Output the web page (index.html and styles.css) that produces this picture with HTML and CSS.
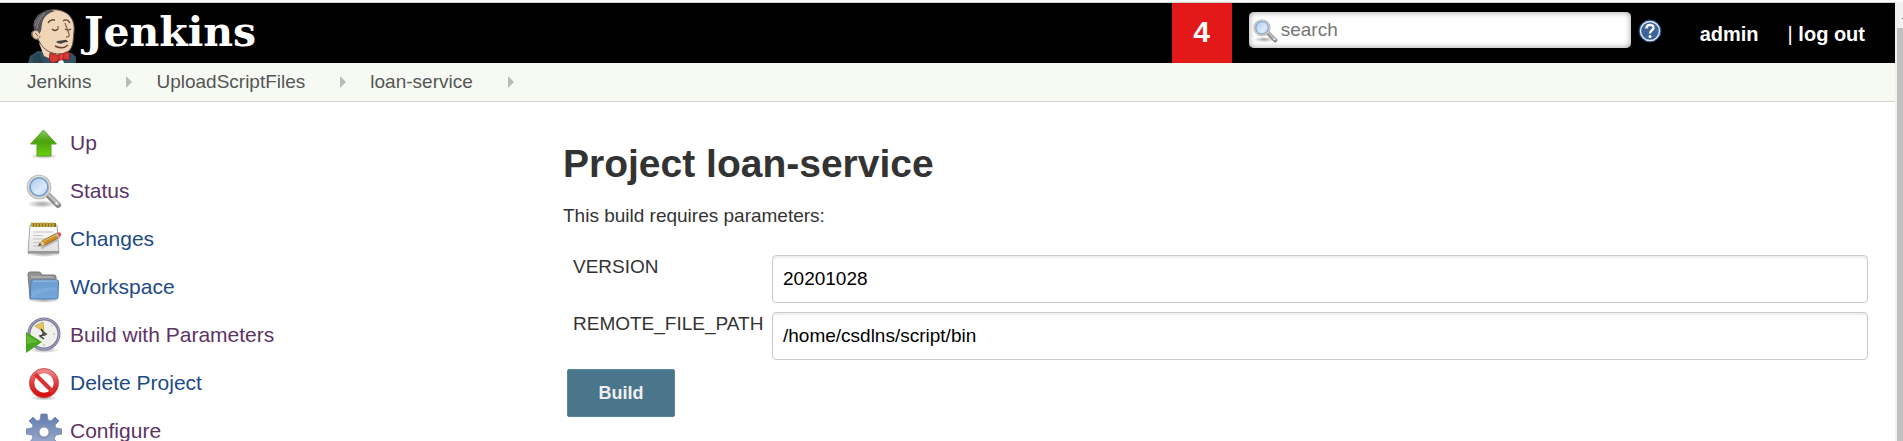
FILE: index.html
```html
<!DOCTYPE html>
<html lang="en">
<head>
<meta charset="utf-8">
<title>loan-service [Jenkins]</title>
<link rel="stylesheet" href="styles.css">
</head>
<body>
<div class="window">
  <div class="page">
    <header class="header">
      <a class="logo" href="#">
        <svg class="butler" viewBox="0 0 50 54" aria-hidden="true">
          <path d="M1 54 3 47 11 42 34 43 45 44 49 48V54z" fill="#335061"/>
          <path d="M5 48 12 44 17 54H7z" fill="#264452"/>
          <path d="M12 34 17 47 24 50 38 43 30 38z" fill="#f0d6b7"/>
          <path d="M7 29C3 27 4 21 8 22L10 10C15 1 26-1 35 2C44 5 48 13 47 22L46 33C45 41 40 45 33 45C24 45 17 41 13 34L11 30z" fill="#f0d6b7" stroke="#655449" stroke-width="1"/>
          <path d="M8 22C4 15 8 7 14 4C18 1 24 0 28 2C20 4 16 9 15 15L14 22 11 27 10 22z" fill="#555355"/>
          <path d="M8 17C10 10 13 7 18 4M10 20C11 13 13 9 17 6" fill="none" stroke="#929092"/>
          <path d="M11 22C4 19 4 28 8 30C11 31 13 29 13 27M8 24 11 27" fill="#eac8a5" stroke="#6d6b6d" stroke-width="1"/>
          <path d="M21 14Q23 10 28 11M36 12Q40 9 43 14M25 20Q28 23 31 20M38 20Q41 22 44 20" fill="none" stroke="#4d3c32" stroke-width="1.3"/>
          <path d="M31 20V17M38 14 42 25Q43 28 39 28" fill="none" stroke="#8b6b50" stroke-width="1.3"/>
          <path d="M29 33C31 31 34 32 37 31Q40 30 41 33Q38 33 36 34 33 36 29 33z" fill="#49433e"/>
          <path d="M28 37Q36 41 41 36" fill="none" stroke="#6b3d32" stroke-width="1.4"/>
          <path d="M34 46 37 54H31z" fill="#fff"/>
          <path d="M23 44 33 47 39 43 43 44 42 51 35 50 26 54 22 51z" fill="#d33833" stroke="#87201d" stroke-width=".8"/>
          <path d="M32 45 37 45 36 51 32 51z" fill="#ef3d3a" stroke="#87201d" stroke-width=".7"/>
        </svg>
        <span class="wordmark">Jenkins</span>
      </a>
      <a class="alerts" href="#">4</a>
      <form class="search" role="search">
        <label class="search-box">
          <svg class="search-icon" viewBox="0 0 36 36" aria-hidden="true"><use href="#magnifier"/></svg>
          <input class="search-input" type="text" placeholder="search" aria-label="search">
        </label>
        <a class="help" href="#" aria-label="Help">
          <svg class="help-icon" viewBox="0 0 24 24" aria-hidden="true">
            <circle cx="12" cy="12" r="11" fill="#31598e" stroke="#254674"/>
            <circle cx="12" cy="12" r="9.5" fill="#3d6399" stroke="#dce7f4" stroke-width="1.5"/>
            <path d="M8.3 9.5C8.5 4.4 16 5 15.500 9C15.200 11.500 12 11.500 12 14.500" fill="none" stroke="#fff" stroke-width="2.4"/>
            <circle cx="12" cy="17.5" r="1.5" fill="#fff"/>
          </svg>
        </a>
      </form>
      <nav class="login" aria-label="Account">
        <a class="login-link" href="#">admin</a>
        <span class="logout">| <a class="login-link" href="#">log out</a></span>
      </nav>
    </header>

    <nav class="breadcrumbs" aria-label="Breadcrumb">
      <a class="crumb" href="#">Jenkins</a><span class="arrow"></span>
      <a class="crumb" href="#">UploadScriptFiles</a><span class="arrow"></span>
      <a class="crumb" href="#">loan-service</a><span class="arrow"></span>
    </nav>

    <div class="body">
      <nav class="tasks" aria-label="Project tasks">
        <a class="task visited" href="#">
          <svg class="task-icon" viewBox="0 0 36 36" aria-hidden="true">
            <defs>
              <linearGradient id="green" x2="0" y2="1"><stop stop-color="#8bc95b"/><stop offset=".45" stop-color="#4aa20c"/><stop offset="1" stop-color="#6bd00b"/></linearGradient>
              <linearGradient id="glass" x2="1" y2="1"><stop stop-color="#9fc4ee"/><stop offset=".6" stop-color="#dceaf9"/><stop offset="1" stop-color="#a9cbee"/></linearGradient>
              <linearGradient id="paper" x2="0" y2="1"><stop stop-color="#fff"/><stop offset="1" stop-color="#dedede"/></linearGradient>
              <linearGradient id="blue" x2="0" y2="1"><stop stop-color="#6c9dd0"/><stop offset="1" stop-color="#75a7dc"/></linearGradient>
              <linearGradient id="red" x2="0" y2="1"><stop stop-color="#ed8585"/><stop offset=".5" stop-color="#dd3e3e"/><stop offset="1" stop-color="#d80e0e"/></linearGradient>
              <linearGradient id="steel" x2="0" y2="1"><stop stop-color="#5f7daf"/><stop offset="1" stop-color="#a4b1d2"/></linearGradient>
              <radialGradient id="shade"><stop stop-color="#000" stop-opacity=".35"/><stop offset="1" stop-color="#000" stop-opacity="0"/></radialGradient>
            </defs>
            <ellipse cx="18" cy="31" rx="14" ry="3" fill="url(#shade)"/>
            <path d="M17.500 5 30.500 19H25V31H11V19H4.500z" fill="url(#green)" stroke="#55a52a"/>
          </svg>Up</a>
        <a class="task visited" href="#">
          <svg class="task-icon" viewBox="0 0 36 36" aria-hidden="true">
            <g id="magnifier">
              <ellipse cx="16" cy="31" rx="15" ry="4" fill="url(#shade)"/>
              <path d="M22 22 32 32" stroke="#858585" stroke-width="6" stroke-linecap="round"/>
              <path d="M22 21 32 31" stroke="#bdbdbd" stroke-width="3" stroke-linecap="round"/>
              <circle cx="30.500" cy="30.500" r="1.300" fill="#eee"/>
              <circle cx="13" cy="14" r="10.800" fill="url(#glass)" stroke="#b0b2b0" stroke-width="3"/>
              <circle cx="13" cy="14" r="10.800" fill="none" stroke="#dedfdd" stroke-width="1.200"/>
              <circle cx="13" cy="14" r="8.800" fill="none" stroke="#709dd3" stroke-width="1.300"/>
            </g>
          </svg>Status</a>
        <a class="task" href="#">
          <svg class="task-icon" viewBox="0 0 36 36" aria-hidden="true">
            <ellipse cx="18" cy="33" rx="17" ry="3" fill="url(#shade)"/>
            <path d="M4 4H31L33 32H2z" fill="url(#paper)" stroke="#a6a6a6"/>
            <path d="M2 30H33V32.500H2z" fill="#999"/>
            <path d="M5 2H30V6H5z" fill="#8c711c"/>
            <path d="M6 1V6M9 1V6M12 1V6M15 1V6M18 1V6M21 1V6M24 1V6M27 1V6" stroke="#d8bd5a" stroke-width="1.300"/>
            <path d="M7 11H27M7 14.500H17M7 18H22M7 21.500H14M7 25H12" stroke="#c3c3c3" stroke-width="1.200"/>
            <path d="M15 27 31 19" stroke="#777" stroke-opacity=".4" stroke-width="3"/>
            <path d="M12 25 16 20 31 12 34 16 19 24z" fill="#c98c2c" stroke="#8a5a18" stroke-width=".8"/>
            <path d="M17 20.500 31 13.500" stroke="#e8bb5c" stroke-width="1.200"/>
            <path d="M12 25 16 20 19 24z" fill="#e9cc98"/><path d="M12 25 14 22 15.500 24z" fill="#444"/>
            <path d="M29 13 31 12 34 16 32 17z" fill="#bbb"/>
            <path d="M31 12Q34 10 35.500 13.500L34 16z" fill="#e45252"/>
          </svg>Changes</a>
        <a class="task" href="#">
          <svg class="task-icon" viewBox="0 0 36 36" aria-hidden="true">
            <ellipse cx="18" cy="31" rx="17" ry="3" fill="url(#shade)"/>
            <path d="M2 5Q2 3 4 3H13Q15 3 15.500 6H28Q30 6 30 8V29H4z" fill="#929292" stroke="#777"/>
            <path d="M5 8H27" stroke="#c3c3c3"/>
            <path d="M5 13Q5 11 7 11H31Q32.500 11 32.500 13L32 28Q32 30 30 30H4z" fill="url(#blue)" stroke="#4c7eb2"/>
            <path d="M7 12H31" stroke="#a3c4e7"/><path d="M6 22Q19 18 31 18V21Q19 21 6 28z" fill="#a1c5ed" opacity=".25"/>
          </svg>Workspace</a>
        <a class="task visited" href="#">
          <svg class="task-icon" viewBox="0 0 36 36" aria-hidden="true">
            <ellipse cx="18" cy="33" rx="15" ry="3" fill="url(#shade)"/>
            <circle cx="18" cy="17" r="15" fill="#eff0eb" stroke="#77779a" stroke-width="3"/>
            <circle cx="18" cy="17" r="15.300" fill="none" stroke="#a9a9c3"/>
            <path d="M9 9 17 5 18 15z" fill="#e5c55d" stroke="#b79c4b" stroke-width=".7"/>
            <path d="M15 12 17 15 20 17 14 19 18 22" fill="none" stroke="#353535" stroke-width="1.500"/>
            <circle cx="18" cy="17" r="2" fill="#555"/>
            <path d="M27 17H29M18 27V29M25 9 26 8" stroke="#aaa"/>
            <path d="M0 15 16 25 0 36z" fill="#46a51b"/><path d="M1 18 12 25 1 27z" fill="#72c948" opacity=".6"/>
          </svg>Build with Parameters</a>
        <a class="task" href="#">
          <svg class="task-icon" viewBox="0 0 36 36" aria-hidden="true">
            <ellipse cx="18" cy="33" rx="14" ry="2.500" fill="url(#shade)"/>
            <circle cx="18" cy="18" r="12.200" fill="#fff" stroke="url(#red)" stroke-width="5"/>
            <path d="M9 9 27 27" stroke="#d93232" stroke-width="4"/>
            <circle cx="18" cy="18" r="14.500" fill="none" stroke="#c94141" stroke-width=".7"/>
          </svg>Delete Project</a>
        <a class="task visited" href="#">
          <svg class="task-icon" viewBox="0 0 36 36" aria-hidden="true">
            <path fill="url(#steel)" stroke="#7685ad" stroke-width=".8" fill-rule="evenodd" d="M15 1H21L22 7 25 8 29 4 33 8 29 12 30 15 36 16V21L30 22 28 26 32 30 28 34 24 30 21 31 20 36H15L14 31 11 30 7 34 3 30 7 25 6 22 0 21V16L6 15 7 12 3 8 7 4 11 8 14 7zM18 14A5 5 0 1 0 18 24A5 5 0 1 0 18 14z"/>
            <circle cx="18" cy="19" r="6" fill="none" stroke="#8492b5" stroke-width="1.500"/>
          </svg>Configure</a>
      </nav>

      <main class="main">
        <h1 class="title">Project loan-service</h1>
        <p class="intro">This build requires parameters:</p>
        <form class="parameters">
          <div class="fields">
            <label class="field-name" for="version">VERSION</label>
            <input class="field" id="version" type="text" value="20201028">
            <label class="field-name" for="path">REMOTE_FILE_PATH</label>
            <input class="field" id="path" type="text" value="/home/csdlns/script/bin">
          </div>
          <button class="build" type="button">Build</button>
        </form>
      </main>
    </div>
  </div>
  <div class="scrollbar" aria-hidden="true"><div class="scroll-up"></div><div class="thumb"></div></div>
</div>
</body>
</html>
```
FILE: styles.css
```css
* { box-sizing: border-box; }

body {
  margin: 0;
  background: #fff;
  color: #333;
  font: 19px/24px "Liberation Sans", Arial, sans-serif;
}

a { text-decoration: none; }

.window {
  display: flex;
  height: 100vh;
  overflow: hidden;
  border-top: 2px solid #fafafa;
}

.page {
  flex: 1;
  min-width: 0;
  border-top: 1px solid #d0d0d0;
}

.header {
  display: flex;
  height: 60px;
  padding: 0 30px 0 27px;
  background: #000;
}

.logo {
  display: flex;
  gap: 7px;
  margin-right: auto;
  color: #fff;
}

.butler {
  align-self: flex-end;
  width: 50px;
  height: 54px;
}

.wordmark {
  font: bold 41px/58px "DejaVu Serif", Georgia, serif;
}

.alerts {
  width: 60px;
  margin-right: 17px;
  background: #e31818;
  color: #fff;
  font-size: 30px;
  font-weight: bold;
  line-height: 58px;
  text-align: center;
}

.search {
  display: flex;
  gap: 7px;
  padding-top: 9px;
}

.search-box {
  display: flex;
  align-items: center;
  gap: 3px;
  width: 382px;
  height: 36px;
  padding-left: 4px;
  border-radius: 5px;
  background: #fff;
  box-shadow: inset 0 0 6px #999;
}

.search-icon {
  width: 25px;
  height: 25px;
}

.search-input {
  flex: 1;
  min-width: 0;
  padding: 0;
  border: 0;
  outline: 0;
  background: transparent;
  font: inherit;
}

.search-input::placeholder { color: #757575; }

.help { padding-top: 7px; }

.help-icon {
  display: block;
  width: 24px;
  height: 24px;
}

.login {
  display: flex;
  gap: 29px;
  margin-left: 38px;
  color: #fff;
  font-size: 20px;
  font-weight: bold;
  line-height: 62px;
}

.login-link { color: #fff; }

.logout { font-weight: normal; }
.logout .login-link { font-weight: bold; }

.breadcrumbs {
  display: flex;
  align-items: center;
  height: 39px;
  padding-left: 27px;
  border-bottom: 1px solid #d3d7cf;
  background: #f6faf2;
}

.crumb { color: #555; }

.arrow {
  margin: 0 24px 0 35px;
  border: 6px solid transparent;
  border-right: 0;
  border-left-color: #bababa;
}

.body {
  display: flex;
  padding-right: 27px;
}

.tasks {
  flex: 0 0 536px;
  padding: 17px 0 0 26px;
  font-size: 21px;
}

.task {
  display: flex;
  align-items: center;
  gap: 8px;
  height: 48px;
  color: #204a87;
}

.visited { color: #5c3566; }

.task-icon {
  width: 36px;
  height: 36px;
}

.main {
  flex: 1;
  padding: 38px 0 0 27px;
}

.title {
  margin: 0;
  font-size: 39px;
  line-height: 48px;
}

.intro { margin: 16px 0 27px; }

.fields {
  display: grid;
  grid-template-columns: minmax(195px, auto) 1fr;
  gap: 9px 4px;
  padding-left: 10px;
}

.field {
  width: 100%;
  height: 48px;
  padding: 0 10px;
  border: 1px solid #ccc;
  border-radius: 4px;
  box-shadow: inset 0 2px 2px #eee;
  background: #fff;
  color: #000;
  font: inherit;
}

.build {
  width: 108px;
  height: 48px;
  margin: 9px 4px;
  border: 1px solid #5788a0;
  border-radius: 2px;
  background: #4b758b;
  color: #eee;
  font: bold 18px "Liberation Sans", Arial, sans-serif;
}

.scrollbar {
  display: flex;
  flex-direction: column;
  width: 8px;
  padding: 16px 0 0 2px;
  background: #f1f1f1;
}

.scroll-up {
  flex: none;
  width: 1px;
  height: 1px;
  margin: 0 0 9px auto;
  background: #505050;
}

.thumb {
  flex: 1;
  background: #c1c1c1;
}
```
